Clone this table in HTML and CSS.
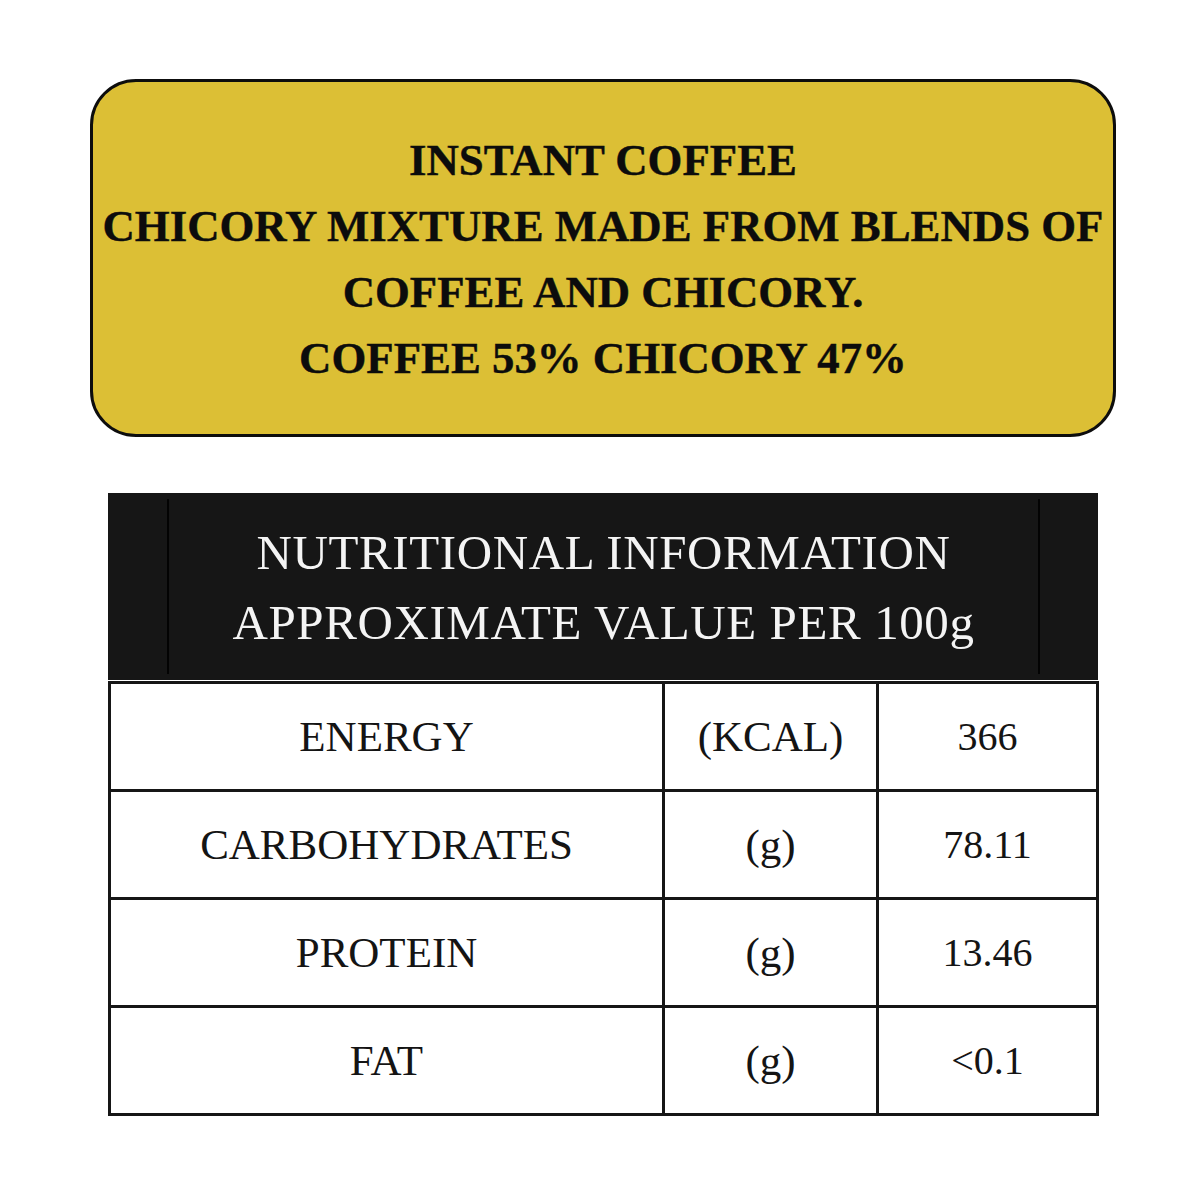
FILE: index.html
```html
<!DOCTYPE html>
<html>
<head>
<meta charset="utf-8">
<link rel="stylesheet" href="styles.css">
</head>
<body>
<div class="page">
  <div class="label">
    <p>INSTANT COFFEE</p>
    <p>CHICORY MIXTURE MADE FROM BLENDS OF</p>
    <p>COFFEE AND CHICORY.</p>
    <p>COFFEE 53% CHICORY 47%</p>
  </div>
  <div class="nutrition">
    <div class="head">
      <div class="head-inner">
        <p>NUTRITIONAL INFORMATION</p>
        <p>APPROXIMATE VALUE PER 100g</p>
      </div>
    </div>
    <table class="facts">
      <tr><td class="name">ENERGY</td><td class="unit">(KCAL)</td><td class="val">366</td></tr>
      <tr><td class="name">CARBOHYDRATES</td><td class="unit">(g)</td><td class="val">78.11</td></tr>
      <tr><td class="name">PROTEIN</td><td class="unit">(g)</td><td class="val">13.46</td></tr>
      <tr><td class="name">FAT</td><td class="unit">(g)</td><td class="val">&lt;0.1</td></tr>
    </table>
  </div>
</div>
</body>
</html>
```

FILE: styles.css
```css
html, body {
  margin: 0;
  padding: 0;
  background: #ffffff;
}
.page {
  width: 1200px;
  height: 1200px;
  padding-top: 79px;
  box-sizing: border-box;
  font-family: "Liberation Serif", "DejaVu Serif", serif;
}
.label {
  margin-left: 90px;
  width: 1026px;
  height: 358px;
  box-sizing: border-box;
  border: 3px solid #0d0d0d;
  border-radius: 46px;
  background: #dcbf35;
  display: flex;
  flex-direction: column;
  justify-content: center;
  align-items: center;
  padding-top: 1px;
}
.label p {
  margin: 0;
  font-weight: bold;
  font-size: 44.8px;
  line-height: 66px;
  color: #0c0c0c;
  white-space: nowrap;
  text-align: center;
  -webkit-text-stroke: 0.4px #0c0c0c;
}
.nutrition {
  margin-top: 56px;
  margin-left: 108px;
  width: 990px;
}
.head {
  height: 187px;
  background: #161616;
  padding: 6px 0;
  box-sizing: border-box;
}
.head-inner {
  margin: 0 58px 0 59px;
  height: 100%;
  border-left: 2px solid #030303;
  border-right: 2px solid #030303;
  display: flex;
  flex-direction: column;
  justify-content: center;
  align-items: center;
  padding-top: 3px;
  box-sizing: border-box;
}
.head-inner p {
  margin: 0;
  color: #f4f4f4;
  font-size: 49px;
  letter-spacing: 0.6px;
  line-height: 70px;
  white-space: nowrap;
}
.facts {
  width: 988px;
  border-collapse: collapse;
  margin-top: 1px;
  margin-left: 0;
  table-layout: fixed;
}
.facts td {
  border: 3px solid #161616;
  height: 105px;
  text-align: center;
  vertical-align: middle;
  font-size: 43px;
  color: #141414;
  padding: 0;
}
.facts td.name { width: 551px; }
.facts td.unit { width: 211px; }
.facts td.val { width: 217px; font-size: 40px; }
```
